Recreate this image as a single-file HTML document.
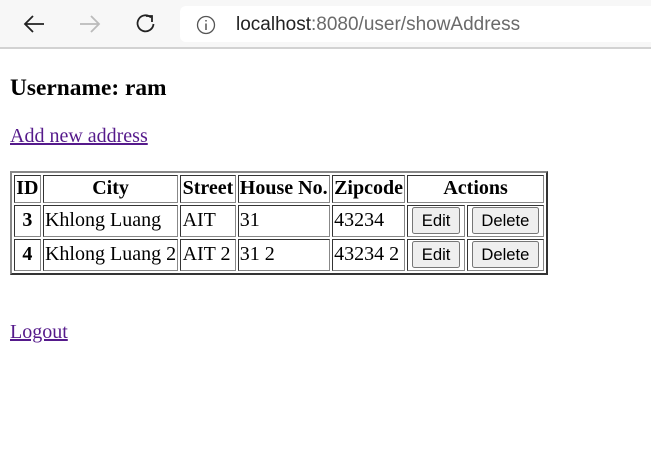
<!DOCTYPE html>
<html><head><style>
html,body{margin:0;padding:0;background:#fff;width:651px;height:462px;overflow:hidden}
#bar{position:absolute;left:0;top:0;width:651px;height:47px;background:#f7f7f7;border-bottom:2px solid #d2d2d2}
#url{position:absolute;left:180px;top:6px;width:480px;height:36px;background:#fff;border-radius:6px}
#urltext{position:absolute;left:56px;top:8px;font:19px "Liberation Sans",sans-serif;color:#222}
#urltext span{color:#6a6a6a}
#content{position:absolute;top:41px;left:0;width:521px;zoom:1.25;font-family:"Liberation Serif",serif;font-size:16px}
#content .in{margin:8px}
h3{margin:18.72px 0}
a{color:#551a8b}
table{border:2px outset #888;border-spacing:2px}
td,th{border:1px inset #888;padding:1px}
button{font:13.3px "Liberation Sans",sans-serif;height:22px;padding:0 7px;margin:0 2px;background:#efefef;border:1px solid #767676;border-radius:2px;color:#000}
</style></head><body>
<div id="bar">
<svg style="position:absolute;left:22px;top:13px" width="24" height="22"><path d="M22 11H3M11 3L3 11L11 19" stroke="#222" stroke-width="1.8" fill="none"/></svg>
<svg style="position:absolute;left:78px;top:13px" width="24" height="22"><path d="M2 11H21M13 3L21 11L13 19" stroke="#bbb" stroke-width="1.8" fill="none"/></svg>
<svg style="position:absolute;left:134px;top:12px" width="24" height="24"><path d="M17 5.5A8 8 0 1 0 19.5 12" stroke="#222" stroke-width="1.8" fill="none"/><path d="M12 4H18V10" stroke="#222" stroke-width="1.8" fill="none"/></svg>
<div id="url">
<svg style="position:absolute;left:16px;top:9px" width="20" height="20"><circle cx="10" cy="10" r="8.5" stroke="#555" stroke-width="1.3" fill="none"/><path d="M10 8.5V15M10 5V6.5" stroke="#555" stroke-width="1.5"/></svg>
<div id="urltext">localhost<span>:8080/user/showAddress</span></div>
</div>
</div>
<div id="content"><div class="in">
<h3>Username: ram</h3>
<a href="#">Add new address</a><br><br>
<table>
<tr><th>ID</th><th>City</th><th>Street</th><th>House No.</th><th>Zipcode</th><th colspan="2">Actions</th></tr>
<tr><th>3</th><td>Khlong Luang</td><td>AIT</td><td>31</td><td>43234</td><td><button>Edit</button></td><td><button>Delete</button></td></tr>
<tr><th>4</th><td>Khlong Luang 2</td><td>AIT 2</td><td>31 2</td><td>43234 2</td><td><button>Edit</button></td><td><button>Delete</button></td></tr>
</table>
<br><br>
<a href="#">Logout</a>
</div></div>
</body></html>
